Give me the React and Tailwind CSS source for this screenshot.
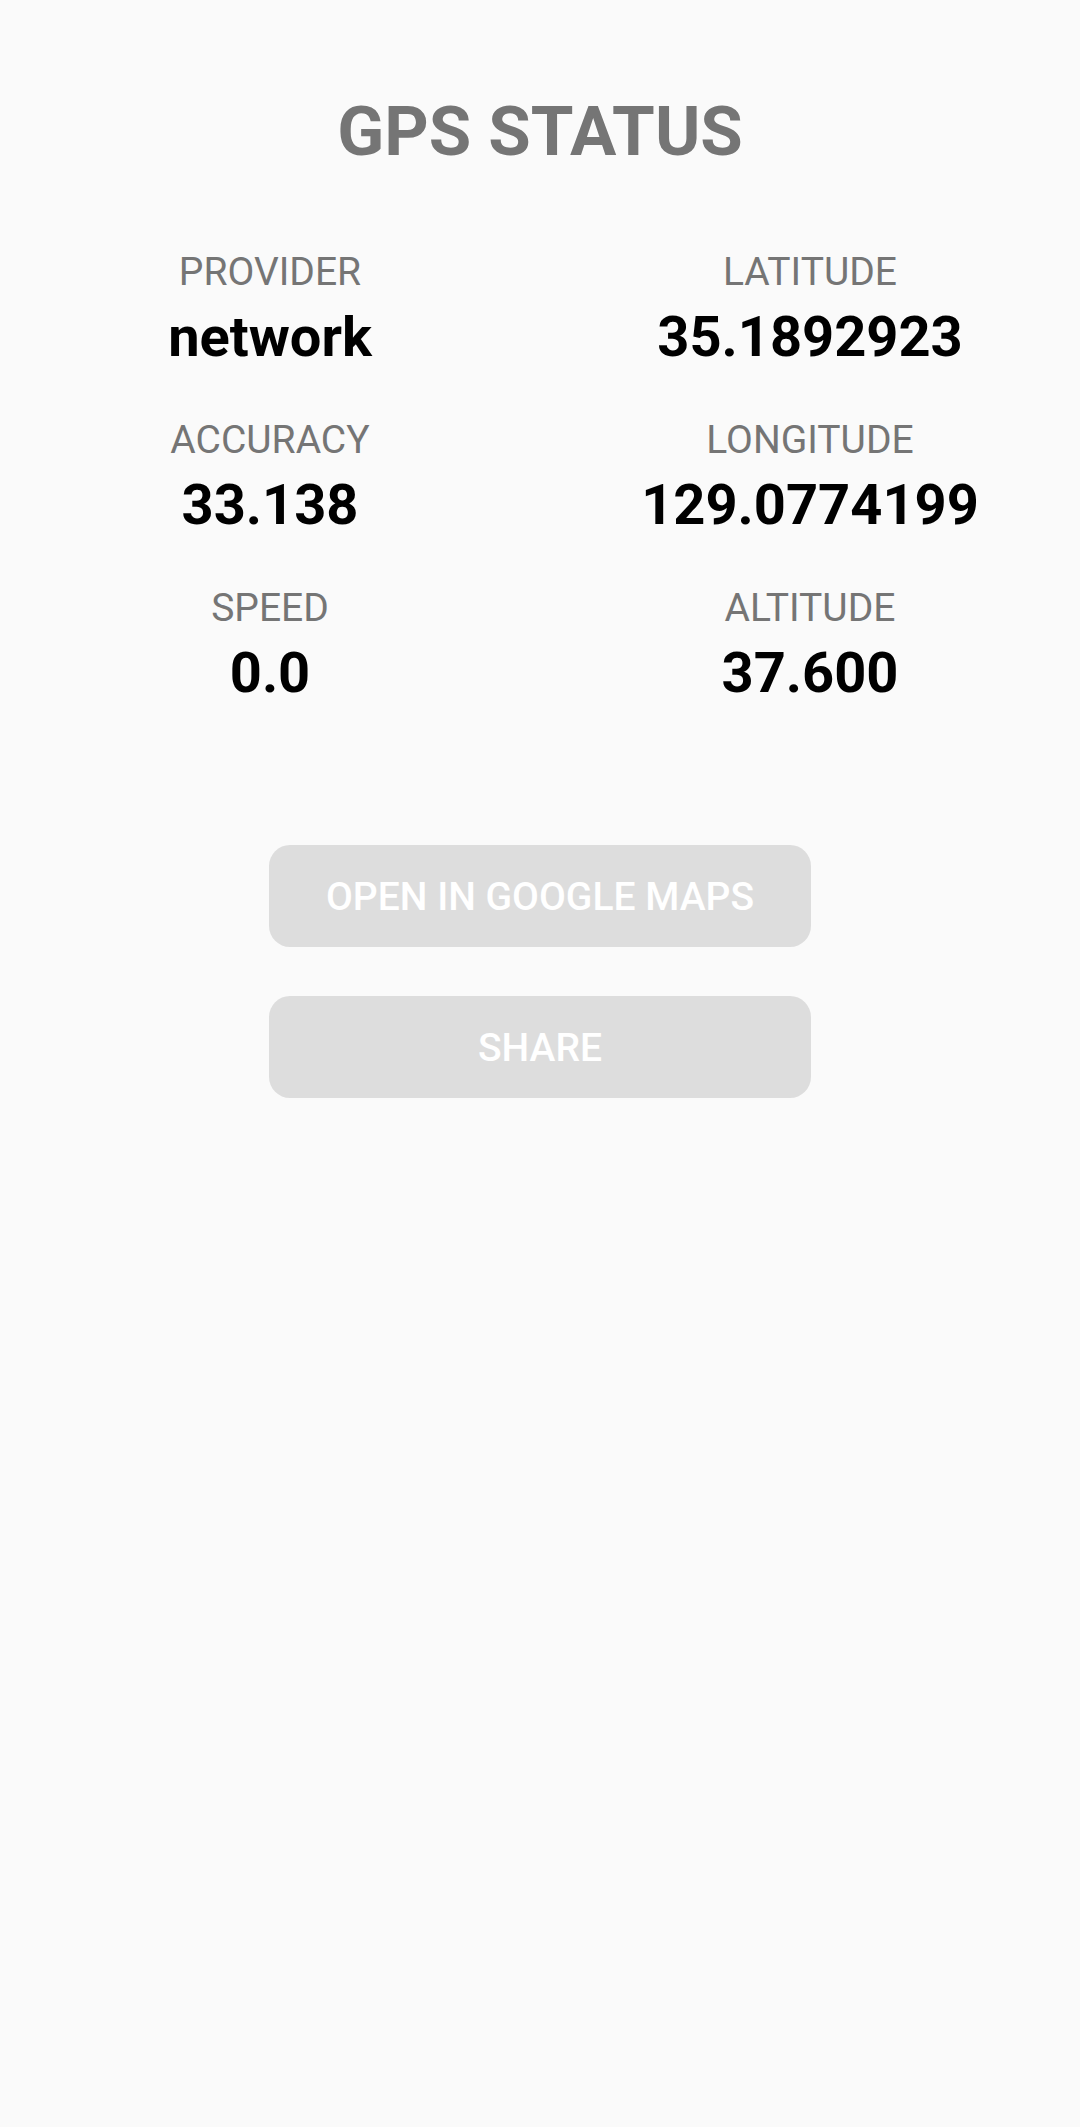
import React from "react";

const items = [
  ["PROVIDER", "network", "LATITUDE", "35.1892923"],
  ["ACCURACY", "33.138", "LONGITUDE", "129.0774199"],
  ["SPEED", "0.0", "ALTITUDE", "37.600"],
];

function Cell({ label, value }) {
  return (
    <div className="flex flex-col items-center">
      <div className="text-[39px] leading-none text-[#757575]">{label}</div>
      <div className="mt-[17px] text-[56px] leading-none font-bold text-black">{value}</div>
    </div>
  );
}

export default function App() {
  return (
    <div
      className="w-[1080px] h-[2127px] bg-[#fafafa] flex flex-col items-center pt-[97px]"
      style={{ fontFamily: "Roboto, 'Noto Sans', sans-serif" }}
    >
      <div className="text-[69px] leading-none font-bold text-[#757575]">GPS STATUS</div>
      <div className="w-full mt-[87px] flex flex-col gap-[56px]">
        {items.map((r) => (
          <div key={r[0]} className="grid grid-cols-2">
            <Cell label={r[0]} value={r[1]} />
            <Cell label={r[2]} value={r[3]} />
          </div>
        ))}
      </div>
      <div className="mt-[144px] flex flex-col gap-[49px]">
        <button className="w-[542px] h-[102px] pt-[3px] rounded-[21px] bg-[#dddddd] text-white text-[39px] font-medium">
          OPEN IN GOOGLE MAPS
        </button>
        <button className="w-[542px] h-[102px] pt-[3px] rounded-[21px] bg-[#dddddd] text-white text-[39px] font-medium">
          SHARE
        </button>
      </div>
    </div>
  );
}
